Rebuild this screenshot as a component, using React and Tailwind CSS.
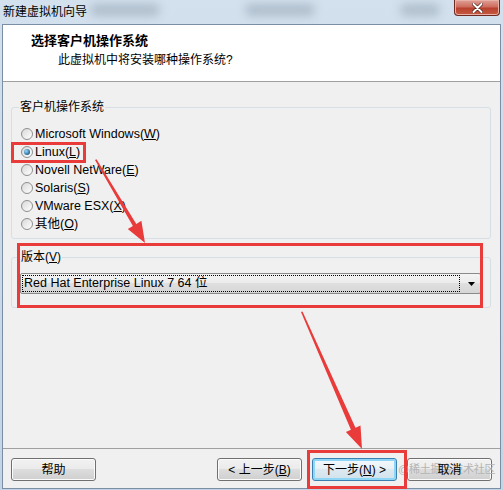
import React from 'react';

// Windows 7 style radio button
function Radio({ checked }) {
  return (
    <span className="flex h-[12px] w-[12px] shrink-0 items-center justify-center rounded-full border border-[#8e8f8f] bg-[linear-gradient(135deg,#d8d8d8,#ffffff)]">
      {checked && (
        <span className="h-[6px] w-[6px] rounded-full bg-[radial-gradient(circle_at_35%_35%,#9adcff,#1c5f8c_75%)]" />
      )}
    </span>
  );
}

function RadioRow({ checked, children }) {
  return (
    <div className="flex h-[18px] items-center gap-[2px]">
      <Radio checked={checked} />
      <span className="text-[12.5px] leading-[16px]">{children}</span>
    </div>
  );
}

const btn =
  'flex h-[23px] w-[85px] items-center justify-center rounded-[3px] border text-[12px] leading-none text-black';
const btnFace =
  'border-[#707070] bg-[linear-gradient(#f2f2f2_0%,#ebebeb_45%,#dddddd_50%,#cfcfcf_100%)] shadow-[inset_0_0_0_1px_#fbfbfb]';

export default function App() {
  const os = [
    ['Microsoft Windows(', 'W', ')', false],
    ['Linux(', 'L', ')', true],
    ['Novell NetWare(', 'E', ')', false],
    ['Solaris(', 'S', ')', false],
    ['VMware ESX(', 'X', ')', false],
    ['其他(', 'O', ')', false],
  ];

  return (
    <div className="relative h-[490px] w-[503px] overflow-hidden bg-[linear-gradient(#d3e0ed,#c2d4e6)] font-['Liberation_Sans','Noto_Sans_CJK_SC',sans-serif] text-[12px] text-black">
      {/* blurred glass behind the title bar */}
      <div className="pointer-events-none absolute left-[90px] top-[4px] h-[12px] w-[70px] rounded-full bg-[#8c9bab]/50 blur-[5px]" />
      <div className="pointer-events-none absolute left-[245px] top-[4px] h-[12px] w-[70px] rounded-full bg-[#8c9bab]/50 blur-[5px]" />
      <div className="pointer-events-none absolute left-[400px] top-[4px] h-[12px] w-[40px] rounded-full bg-[#8c9bab]/50 blur-[5px]" />

      {/* title bar */}
      <div className="relative flex h-[24px] items-center pl-[3px] leading-none">
        <span>新建虚拟机向导</span>
        <div className="absolute right-[3px] top-0 flex h-[16px] w-[46px] items-center justify-center rounded-b-[4px] border border-t-0 border-[#6e2a22] bg-[linear-gradient(#e0a197_0%,#cf6d5f_45%,#b8412f_55%,#c65a40_100%)] shadow-[inset_0_0_0_1px_#e7b1a8]">
          <svg width="11" height="10" viewBox="0 0 11 10">
            <path d="M1.5 1 L9.5 9 M9.5 1 L1.5 9" stroke="#4a1a14" strokeWidth="3.2" strokeLinecap="round" />
            <path d="M1.5 1 L9.5 9 M9.5 1 L1.5 9" stroke="#ffffff" strokeWidth="2" strokeLinecap="round" />
          </svg>
        </div>
      </div>

      {/* window body */}
      <div className="ml-[2px] flex h-[465px] w-[499px] flex-col border border-[#7b8ea4] bg-[#f0f0f0]">
        {/* header */}
        <div className="h-[57px] border-b border-[#a0a0a0] bg-white pl-[28px] pt-[7px]">
          <div className="text-[13px] font-bold leading-[18px]">选择客户机操作系统</div>
          <div className="ml-[27px] mt-[2px] leading-[16px]">此虚拟机中将安装哪种操作系统?</div>
        </div>

        {/* guest OS group */}
        <fieldset className="ml-[8px] mt-[17px] w-[480px] rounded-[3px] border border-[#d5dfe5] px-[9px] pb-[5px] pt-[10px]">
          <legend className="-ml-[2px] px-[1px] leading-[16px]">客户机操作系统</legend>
          {os.map(([a, k, b, c]) => (
            <RadioRow key={k} checked={c}>
              {a}
              <u>{k}</u>
              {b}
            </RadioRow>
          ))}
        </fieldset>

        {/* version group */}
        <fieldset className="ml-[8px] mt-[10px] w-[480px] rounded-[3px] border border-[#d5dfe5] px-[8px] pb-[13px] pt-[8px]">
          <legend className="px-[1px] leading-[16px]">
            版本(<u>V</u>)
          </legend>
          <div className="flex h-[21px] w-[461px] items-center rounded-[2px] border border-[#8a8a8a] bg-[linear-gradient(#f4f4f4_0%,#ececec_45%,#dfdfdf_50%,#d6d6d6_100%)] pl-[1px] pr-[5px]">
            <div className="flex h-[17px] flex-1 items-center border border-dotted border-black pl-[1px] text-[12.5px] leading-none">
              Red Hat Enterprise Linux 7 64 位
            </div>
            <svg className="ml-[8px]" width="7" height="4" viewBox="0 0 7 4">
              <path d="M0 0 H7 L3.5 4 Z" fill="#000" />
            </svg>
          </div>
        </fieldset>

        {/* footer buttons */}
        <div className="mt-auto flex items-center border-t border-[#a0a0a0] px-[8px] pb-[7px] pt-[9px]">
          <button className={`${btn} ${btnFace}`}>帮助</button>
          <div className="ml-auto flex gap-[10px]">
            <button className={`${btn} ${btnFace}`}>
              &lt; 上一步(<u>B</u>)
            </button>
            <button className={`${btn} border-[#3c7fb1] bg-[linear-gradient(#f3f8fb_0%,#eaf2f7_45%,#dce9f1_50%,#d1e2ec_100%)] shadow-[inset_0_0_0_2px_#8fd6f6]`}>
              下一步(<u>N</u>) &gt;
            </button>
            <button className={`${btn} ${btnFace} relative`}>
              <span className="absolute left-[-10px] top-[5px] whitespace-nowrap text-[11px] leading-none tracking-[-0.2px] text-[#b4b4b4]">
                @稀土掘金技术社区
              </span>
              <span className="relative">取消</span>
            </button>
          </div>
        </div>
      </div>

      {/* red annotations */}
      <svg className="pointer-events-none absolute left-0 top-0" width="503" height="490" viewBox="0 0 503 490">
        <g fill="none" stroke="#ea3b3b" strokeWidth="3">
          <rect x="12.5" y="143.5" width="72" height="18" />
          <rect x="18.5" y="244.5" width="463" height="62" />
          <rect x="308.5" y="451.5" width="97" height="36" />
        </g>
        <g fill="#ea3b3b">
          <polygon points="95,160 96.5,159.2 136.3,223.9 141.4,220.7 145,243 127.8,229.1 132.9,225.9" />
          <polygon points="301,312 302.5,311.4 355.5,427.8 360.5,425.6 362,449 345.9,432 350.9,429.8" />
        </g>
      </svg>
    </div>
  );
}
